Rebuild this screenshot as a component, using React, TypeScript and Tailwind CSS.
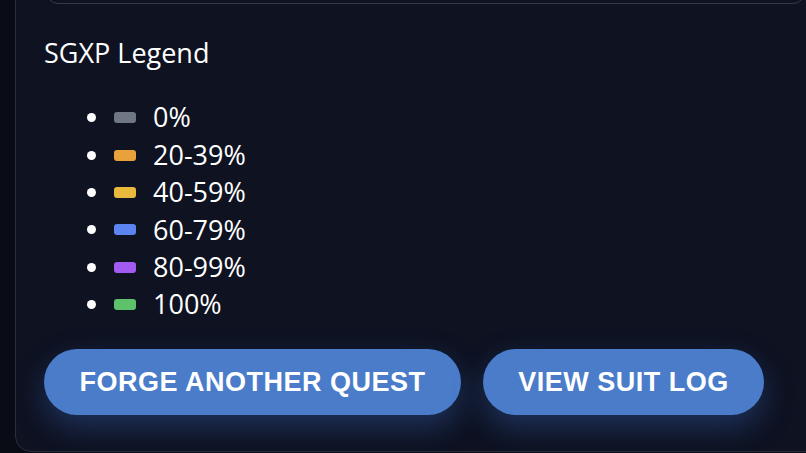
import React from "react";

const items = [
  { label: "0%", color: "bg-[#6f7684]" },
  { label: "20-39%", color: "bg-[#e9a23b]" },
  { label: "40-59%", color: "bg-[#e8b93c]" },
  { label: "60-79%", color: "bg-[#5b84f1]" },
  { label: "80-99%", color: "bg-[#a25af0]" },
  { label: "100%", color: "bg-[#5ec26a]" },
];

export default function App() {
  return (
    <div className="h-[453px] w-[806px] overflow-hidden bg-[#0a0c15] pl-[15px]">
      <div className="-mt-[60px] mr-[-40px] h-[512px] rounded-[16px] border border-[#2a2f3d] bg-[#0e1221] pl-[28px] pr-[40px]">
        <div className="ml-[2px] h-[63px] rounded-[12px] border border-[#363b4a]" />
        <h2
          className="mt-[31px] text-[27px] leading-[36px] text-white"
          style={{ fontFamily: '"Open Sans", "Noto Sans", sans-serif' }}
        >
          SGXP Legend
        </h2>
        <ul
          className="mt-[28px] flex flex-col"
          style={{ fontFamily: '"Open Sans", "Noto Sans", sans-serif' }}
        >
          {items.map((it) => (
            <li key={it.label} className="flex h-[37.4px] items-center text-[27px] text-white">
              <span className="ml-[43px] h-[9px] w-[9px] rounded-full bg-white" />
              <span className={`ml-[18px] h-[11px] w-[22px] rounded-[3px] ${it.color}`} />
              <span className="ml-[17px]">{it.label}</span>
            </li>
          ))}
        </ul>
        <div className="mt-[26px] flex gap-[22px]" style={{ fontFamily: '"Liberation Sans", Arial, sans-serif' }}>
          <button className="flex h-[66px] w-[417px] items-center justify-center rounded-full bg-[#4a7cca] text-[27px] font-bold tracking-[0.5px] text-white shadow-[0_12px_30px_rgba(60,110,200,0.35)]">
            FORGE ANOTHER QUEST
          </button>
          <button className="flex h-[66px] w-[281px] items-center justify-center rounded-full bg-[#4a7cca] text-[27px] font-bold tracking-[0.5px] text-white shadow-[0_12px_30px_rgba(60,110,200,0.35)]">
            VIEW SUIT LOG
          </button>
        </div>
      </div>
    </div>
  );
}
